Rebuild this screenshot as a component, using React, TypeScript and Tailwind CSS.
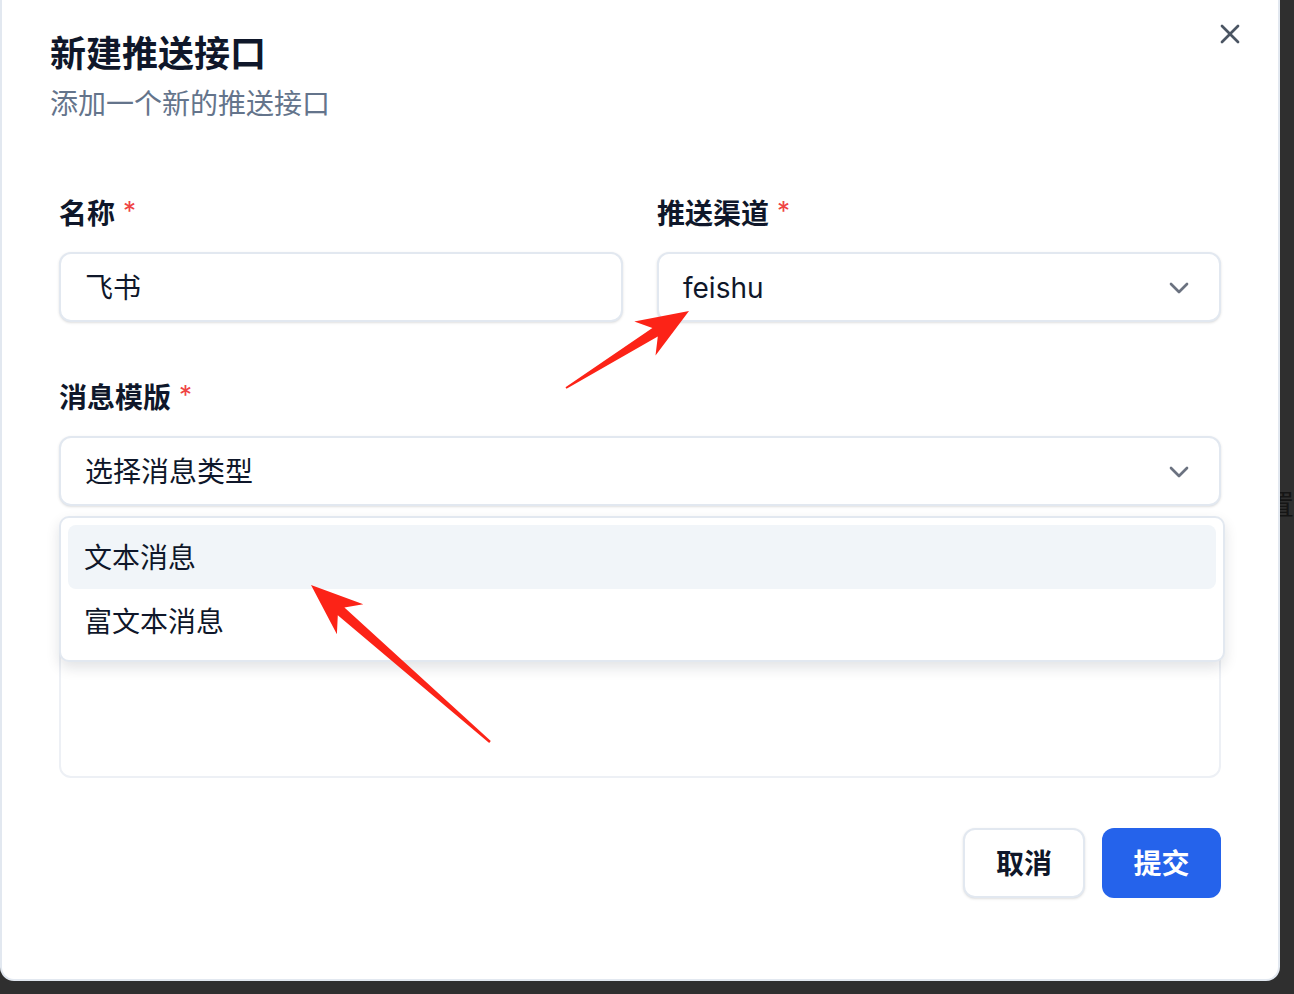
import { X, ChevronDown } from "lucide-react";
import type { ReactNode } from "react";

function Field({ label, children }: { label?: string; children: ReactNode }) {
  return (
    <div>
      {label ? (
        <label className="flex items-start pt-[1px] text-[28px] font-semibold leading-[40px] text-[#0f172a]">
          {label}
          <span className="ml-[8px] text-[26px] font-normal leading-[34px] text-[#ef4444]">*</span>
        </label>
      ) : (
        <div className="h-[41px]" />
      )}
      <div className="relative mt-[18px]">{children}</div>
    </div>
  );
}

const box =
  "flex h-[70px] w-full items-center rounded-[12px] border-2 border-[#e2e8f0] bg-white pl-6 pr-6 pt-[2px] text-[28px] text-[#0f172a] shadow-sm";

export default function App() {
  return (
    <div className="relative h-[994px] w-[1294px] overflow-hidden bg-[#2f2f2f] font-['Inter','Noto_Sans_CJK_SC',sans-serif]">
      <span className="absolute left-[1266px] top-[484px] text-[28px] text-[#151515]">置</span>

      <div className="relative z-10 h-[981px] w-[1280px] rounded-b-[14px] border-2 border-t-0 border-[#e2e8f0] bg-white px-[48px] pt-[32px]">
        <button className="absolute right-[32px] top-[18px] text-[#4b5563]">
          <X size={32} strokeWidth={2} />
        </button>

        <h2 className="text-[36px] font-bold leading-[44px] text-[#0f172a]">新建推送接口</h2>
        <p className="mt-2 text-[28px] leading-[40px] text-[#64748b]">添加一个新的推送接口</p>

        <div className="mt-[69px] px-[9px]">
          <div className="grid grid-cols-2 gap-[34px]">
            <Field label="名称">
              <div className={box}>飞书</div>
            </Field>
            <Field label="推送渠道">
              <div className={`${box} justify-between`}>
                <span>feishu</span>
                <ChevronDown size={32} strokeWidth={2} className="text-[#6b7280]" />
              </div>
            </Field>
          </div>

          <div className="mt-[55px]">
            <Field label="消息模版">
              <div className={`${box} justify-between`}>
                <span>选择消息类型</span>
                <ChevronDown size={32} strokeWidth={2} className="text-[#6b7280]" />
              </div>
              <div className="absolute -right-[4px] left-0 top-[80px] z-10 rounded-[10px] border-2 border-[#e2e8f0] bg-white p-[7px] shadow-[0_6px_14px_rgba(15,23,42,0.12)]">
                <div className="flex h-[64px] items-center rounded-[8px] bg-[#f1f5f9] px-4 pt-[2px] text-[28px] text-[#0f172a]">
                  文本消息
                </div>
                <div className="flex h-[64px] items-center rounded-[8px] px-4 pt-[2px] text-[28px] text-[#0f172a]">
                  富文本消息
                </div>
              </div>
            </Field>
          </div>

          <div className="mt-[55px]">
            <Field>
              <div className="h-[158px] w-full rounded-[12px] border-2 border-[#edf0f5] bg-white" />
            </Field>
          </div>

          <div className="mt-[50px] flex justify-end gap-[17px]">
            <button className="h-[70px] w-[122px] rounded-[12px] border-2 border-[#e2e8f0] bg-white pt-[2px] text-[28px] font-semibold text-[#0f172a] shadow-sm">
              取消
            </button>
            <button className="h-[70px] w-[119px] rounded-[12px] bg-[#2563eb] pt-[2px] text-[28px] font-semibold text-white">
              提交
            </button>
          </div>
        </div>
      </div>

      <svg className="pointer-events-none absolute left-0 top-0 z-20" width="1294" height="994" viewBox="0 0 1294 994">
        <polygon
          fill="#fc2317"
          points="566.5,388.8 657.8,336.4 655.5,355.6 689,311 634.3,321.6 652.4,328 565.5,387.2"
        />
        <polygon
          fill="#fc2317"
          points="490.8,741.1 344.4,607.6 363.3,604.3 311,585 336.9,634.3 337.8,615.2 489.2,742.9"
        />
      </svg>
    </div>
  );
}
